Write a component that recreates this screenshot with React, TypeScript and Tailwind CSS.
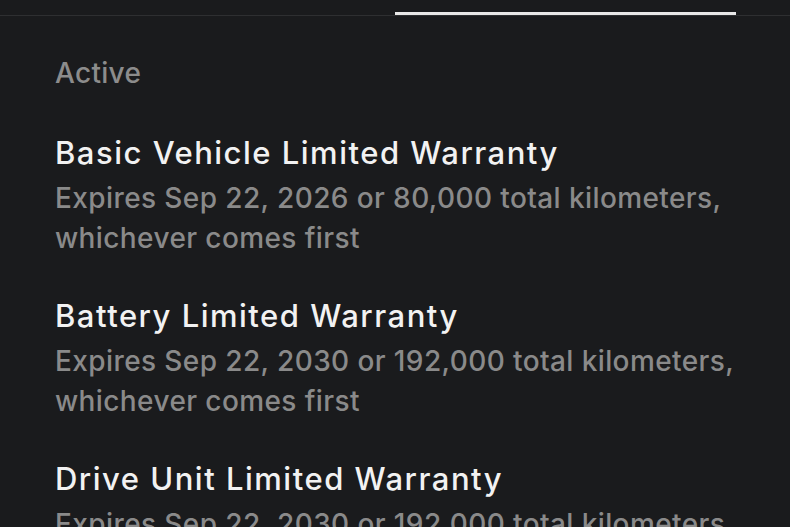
type Item = { title: string; line1: string; line2: string };

const items: Item[] = [
  { title: "Basic Vehicle Limited Warranty", line1: "Expires Sep 22, 2026 or 80,000 total kilometers,", line2: "whichever comes first" },
  { title: "Battery Limited Warranty", line1: "Expires Sep 22, 2030 or 192,000 total kilometers,", line2: "whichever comes first" },
  { title: "Drive Unit Limited Warranty", line1: "Expires Sep 22, 2030 or 192,000 total kilometers,", line2: "whichever comes first" },
];

export default function App() {
  return (
    <div className="w-[790px] h-[527px] overflow-hidden bg-[#1a1b1d] font-['Inter','Noto_Sans',sans-serif]">
      <div className="h-[16px] border-b border-[#2e2f31] flex items-end">
        <div className="ml-[395px] w-[341px] h-[3px] bg-[#e8e8e8]" />
      </div>
      <div className="pl-[55px] flex flex-col">
        <div className="mt-[40px] text-[28px] leading-[34px] font-medium tracking-[0.3px] text-[#8c8c8c]">Active</div>
        <div className="mt-[41px] flex flex-col gap-[36px]">
          {items.map((it) => (
            <div key={it.title} className="flex flex-col">
              <div className="text-[31px] leading-[44px] font-medium tracking-[1.5px] text-[#f2f2f2] whitespace-nowrap">{it.title}</div>
              <div className="mt-[3px] text-[28px] leading-[40px] font-medium tracking-[0.4px] text-[#8a8a8a] whitespace-nowrap">{it.line1}</div>
              <div className="text-[28px] leading-[40px] font-medium tracking-[0.4px] text-[#8a8a8a] whitespace-nowrap">{it.line2}</div>
            </div>
          ))}
        </div>
      </div>
    </div>
  );
}
